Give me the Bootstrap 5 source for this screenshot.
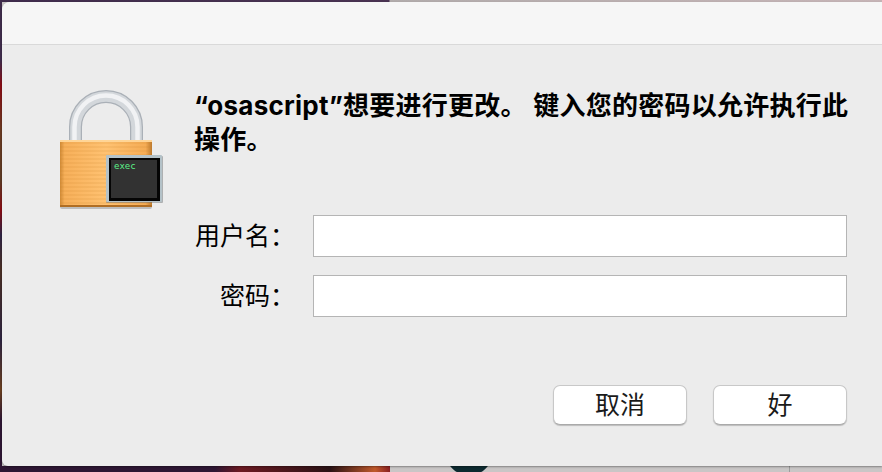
<!DOCTYPE html>
<html lang="zh-CN">
<head>
    <meta charset="UTF-8">
    <meta name="viewport" content="width=device-width, initial-scale=1.0">
    <title>osascript</title>
    <link rel="stylesheet" href="https://cdn.jsdelivr.net/npm/bootstrap@5.3.0/dist/css/bootstrap.min.css">
    <style>
        html, body {
            height: 472px;
            overflow: hidden;
        }
        body {
            font-family: "Liberation Sans", "Noto Sans CJK SC", sans-serif;
            color: #111;
            /* desktop wallpaper peeking out round the dialog */
            background-color: #c9c6c6;
            background-image:
                radial-gradient(circle at 469px 452px, #0d2a30 0, #0d2a30 23px, transparent 24px),
                linear-gradient(90deg, transparent 789px, #9d9d9d 789px, #9d9d9d 790px, transparent 790px),
                linear-gradient(90deg, #2e1633 0, #2e1633 215px, #6d1a22 240px, #2a1215 330px, #c05a2c 375px, #8a1f22 390px, transparent 390px),
                linear-gradient(180deg, #3f2c4c 0, #3f2c4c 60px, #8a0c14 85px, #6a3a22 130px, #5d3a24 180px, #8a0c14 210px, #2e2444 235px, #4a2f24 270px, #2d2440 340px, #6b4020 390px, #2e1633 420px, #2e1633 472px);
            background-size: auto, auto, 100% 6px, 2px 100%;
            background-repeat: no-repeat;
            background-position: 0 0, 0 0, 0 100%, 0 0;
        }
        .top-edge {
            height: 2px;
            background: linear-gradient(90deg, #3f2c4c 0, #4a3352 389px, #b1abab 390px, #c6b4b6 100%);
        }
        .dialog-box {
            width: 880px;
            height: 464px;
            margin-left: 2px;
            background: #ececec;
            border-radius: 8px 0 0 6px;
            box-shadow: 0 1px 2px rgba(0, 0, 0, 0.35);
        }
        .title-strip {
            height: 43px;
            background: #f6f6f6;
            border-bottom: 1px solid #d9d9d9;
            border-radius: 8px 0 0 0;
        }
        .lock-col {
            width: 193px;
            padding: 45px 0 0 58px;
        }
        .main-col {
            width: 652px;
            padding-top: 44px;
        }
        .prompt-text {
            font-family: Inter, "Noto Sans CJK SC", sans-serif;
            font-size: 26px;
            line-height: 34px;
            font-weight: 700;
            letter-spacing: 0.25px;
            color: #000;
            margin-bottom: 58px;
            margin-left: -1px;
            margin-right: -6px;
        }
        .field-row {
            height: 42px;
            margin-bottom: 18px;
        }
        .field-label {
            width: 118px;
            font-size: 25px;
            line-height: 42px;
            text-align: right;
            padding-right: 18px;
            color: #000;
            white-space: nowrap;
        }
        .field-input {
            width: 534px;
            height: 42px;
            border: 1px solid #b5b5b5;
            border-radius: 0;
            background: #fff;
        }
        .button-row {
            margin-top: 68px;
            gap: 26px;
        }
        .dialog-btn {
            width: 134px;
            height: 40px;
            padding: 0;
            font-size: 25px;
            line-height: 38px;
            color: #1a1a1a;
            background: #fff;
            border: 1px solid #c8c8c8;
            border-bottom-color: #aaa;
            border-radius: 7px;
            box-shadow: 0 1px 1px rgba(0, 0, 0, 0.2);
        }
    </style>
</head>
<body>

<div class="top-edge"></div>
<div class="dialog-box">
    <div class="title-strip"></div>
    <div class="d-flex">
        <div class="lock-col">
            <svg width="106" height="122" viewBox="0 0 106 122">
                <defs>
                    <linearGradient id="brass" x1="0" y1="0" x2="1" y2="0">
                        <stop offset="0" stop-color="#d08a36"/>
                        <stop offset="0.05" stop-color="#f7b05a"/>
                        <stop offset="0.5" stop-color="#ffc272"/>
                        <stop offset="0.93" stop-color="#f5ac55"/>
                        <stop offset="1" stop-color="#bd7a2e"/>
                    </linearGradient>
                    <pattern id="ridges" width="4" height="4" patternUnits="userSpaceOnUse">
                        <rect width="4" height="2" fill="#c47a24" opacity="0.12"/>
                    </pattern>
                </defs>
                <!-- shackle -->
                <path d="M15.5 52V37A30.5 30.5 0 0 1 76.5 37V52" fill="none" stroke="#aab0b7" stroke-width="13"/>
                <path d="M15.5 52V37A30.5 30.5 0 0 1 76.5 37V52" fill="none" stroke="#d3d7db" stroke-width="10.5"/>
                <path d="M14.5 52V37A31.5 31.5 0 0 1 77.5 37V52" fill="none" stroke="#f1f2f4" stroke-width="4.5"/>
                <!-- body -->
                <rect x="0" y="51" width="92" height="68" rx="2" fill="#8f8f8f" opacity="0.5"/>
                <rect x="0" y="50" width="92" height="67" rx="2" fill="url(#brass)"/>
                <rect x="0" y="50" width="92" height="67" rx="2" fill="url(#ridges)"/>
                <rect x="0" y="50" width="92" height="2" fill="#ffd596"/>
                <rect x="0" y="115" width="92" height="2" fill="#b06e24"/>
                <!-- terminal badge -->
                <rect x="46" y="66" width="57" height="47" rx="1" fill="#6f7476" opacity="0.5"/>
                <rect x="46" y="65" width="56" height="47" rx="1" fill="#b4c2c8"/>
                <rect x="49" y="68" width="51" height="43" fill="#050505"/>
                <rect x="51" y="70" width="46" height="38" fill="#323232"/>
                <text x="54" y="79" font-family="'DejaVu Sans Mono', monospace" font-size="9" fill="#5cf088">exec</text>
            </svg>
        </div>
        <div class="main-col">
            <p class="prompt-text">“osascript”想要进行更改。 键入您的密码以允许执行此操作。</p>
            <form>
                <div class="d-flex field-row">
                    <label class="field-label" for="username">用户名：</label>
                    <input type="text" class="form-control field-input" id="username">
                </div>
                <div class="d-flex field-row">
                    <label class="field-label" for="password">密码：</label>
                    <input type="password" class="form-control field-input" id="password">
                </div>
                <div class="d-flex justify-content-end button-row">
                    <button type="button" class="btn dialog-btn">取消</button>
                    <button type="button" class="btn dialog-btn">好</button>
                </div>
            </form>
        </div>
    </div>
</div>

<script src="https://cdn.jsdelivr.net/npm/bootstrap@5.3.0/dist/js/bootstrap.bundle.min.js"></script>
</body>
</html>
